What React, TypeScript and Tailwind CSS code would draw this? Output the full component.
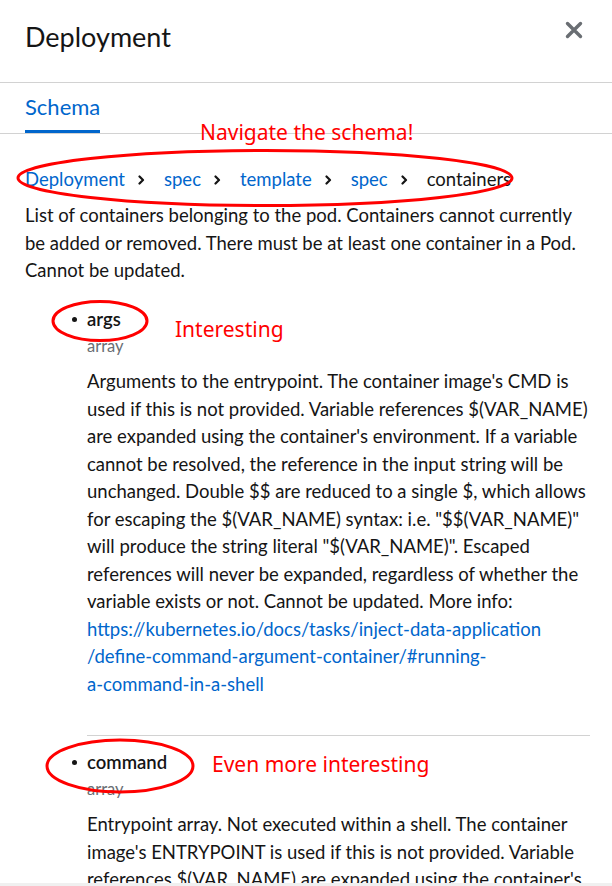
import React from "react";

const body = "font-['Lato',sans-serif]";
const note = "font-['Noto_Sans',sans-serif] text-[#ff0000] text-[21px] leading-[28px]";

function Lines({ lines, className }: { lines: string[]; className?: string }) {
  return (
    <div className={className}>
      {lines.map((l, i) => (
        <div key={i} className="whitespace-nowrap">
          {l}
        </div>
      ))}
    </div>
  );
}

function Chevron() {
  return (
    <svg width="7" height="10" viewBox="0 0 7 10" className="ml-[13.5px] mr-[18.5px] shrink-0">
      <path d="M1.5 1.5 L5 5 L1.5 8.5" fill="none" stroke="#151515" strokeWidth="2.2" strokeLinecap="round" strokeLinejoin="round" />
    </svg>
  );
}

function Field({ name, desc, link }: { name: string; desc: string[]; link?: string[] }) {
  return (
    <div>
      <div className="flex items-center h-[27.5px] text-[18.5px] font-semibold text-[#151515]">
        <span className="w-[5px] h-[5px] rounded-full bg-[#151515] ml-[72px] mr-[10px]" />
        {name}
      </div>
      <div className="pl-[87px] text-[16.5px] leading-[24px] text-[#6a6e73]">array</div>
      <div className="pl-[87px] mt-[10.5px] text-[18.5px] leading-[27.5px] text-[#151515]">
        <Lines lines={desc} />
        {link && <Lines lines={link} className="text-[#0066cc]" />}
      </div>
    </div>
  );
}

export default function App() {
  return (
    <div className={`relative w-[612px] h-[886px] overflow-hidden bg-white ${body}`}>
      <header className="h-[83px] border-b border-[#d2d2d2] px-[25px] pt-[22px] flex justify-between">
        <h1 className="text-[27px] leading-[30px] text-[#151515]">Deployment</h1>
        <button className="mr-[4px] -mt-[1px] h-[18px] w-[18px]" aria-label="Close">
          <svg width="18" height="18" viewBox="0 0 18 18">
            <path d="M2.5 2.5 L15.5 15.5 M15.5 2.5 L2.5 15.5" stroke="#6a6e73" strokeWidth="3.4" strokeLinecap="round" />
          </svg>
        </button>
      </header>

      <nav className="h-[51px] border-b border-[#d2d2d2] px-[25px]">
        <div className="inline-flex flex-col pt-[10px]">
          <span className="text-[22px] leading-[28px] text-[#0066cc]">Schema</span>
          <span className="mt-[9px] h-[3px] bg-[#0066cc]" />
        </div>
      </nav>

      <div className="px-[25px] text-[18.5px] text-[#151515]">
        <div className="mt-[32px] flex items-center h-[28px]">
          <span className="text-[#0066cc]">Deployment</span>
          <Chevron />
          <span className="text-[#0066cc]">spec</span>
          <Chevron />
          <span className="text-[#0066cc]">template</span>
          <Chevron />
          <span className="text-[#0066cc]">spec</span>
          <Chevron />
          <span>containers</span>
        </div>
        <Lines
          className="mt-[8px] leading-[27.5px]"
          lines={[
            "List of containers belonging to the pod. Containers cannot currently",
            "be added or removed. There must be at least one container in a Pod.",
            "Cannot be updated.",
          ]}
        />
      </div>

      <div className="mt-[21.5px]">
        <Field
          name="args"
          desc={[
            "Arguments to the entrypoint. The container image's CMD is",
            "used if this is not provided. Variable references $(VAR_NAME)",
            "are expanded using the container's environment. If a variable",
            "cannot be resolved, the reference in the input string will be",
            "unchanged. Double $$ are reduced to a single $, which allows",
            'for escaping the $(VAR_NAME) syntax: i.e. "$$(VAR_NAME)"',
            'will produce the string literal "$(VAR_NAME)". Escaped',
            "references will never be expanded, regardless of whether the",
            "variable exists or not. Cannot be updated. More info:",
          ]}
          link={[
            "https://kubernetes.io/docs/tasks/inject-data-application",
            "/define-command-argument-container/#running-",
            "a-command-in-a-shell",
          ]}
        />
        <div className="ml-[87px] mr-[22px] mt-[36.5px] mb-[13.5px] border-t border-[#d2d2d2]" />
        <Field
          name="command"
          desc={[
            "Entrypoint array. Not executed within a shell. The container",
            "image's ENTRYPOINT is used if this is not provided. Variable",
            "references $(VAR_NAME) are expanded using the container's",
          ]}
        />
      </div>

      <div className="absolute bottom-0 left-0 right-0 h-[3px] bg-[#f0f0f0]" />

      {/* annotations */}
      <svg className="absolute inset-0 pointer-events-none" width="612" height="886">
        <ellipse cx="265" cy="178" rx="247" ry="27.5" fill="none" stroke="#ff0000" strokeWidth="3" />
        <ellipse cx="100" cy="321" rx="47" ry="19.5" fill="none" stroke="#ff0000" strokeWidth="3" />
        <ellipse cx="120" cy="766" rx="73" ry="26" fill="none" stroke="#ff0000" strokeWidth="3" />
      </svg>
      <span className={`absolute left-[200px] top-[118px] ${note}`}>Navigate the schema!</span>
      <span className={`absolute left-[175px] top-[315px] ${note}`}>Interesting</span>
      <span className={`absolute left-[212px] top-[750px] ${note}`}>Even more interesting</span>
    </div>
  );
}
